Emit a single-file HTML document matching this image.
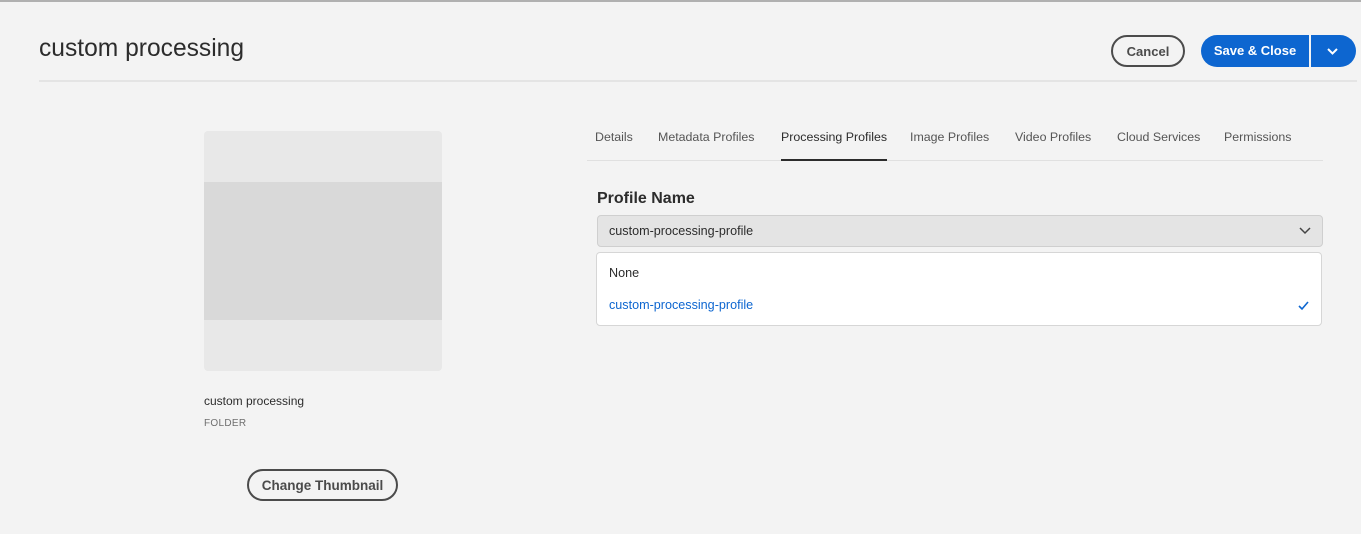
<!DOCTYPE html>
<html><head><style>
body{margin:0;width:1361px;height:534px;background:#f3f3f3;font-family:"Liberation Sans",sans-serif;position:relative;overflow:hidden;color:#2c2c2c}
.a{position:absolute}
.tab{position:absolute;top:130px;font-size:12.4px;color:#555;white-space:nowrap}
</style></head><body>
<div class="a" style="left:0;top:0;width:1361px;height:2px;background:#b0b0b0"></div>
<div class="a" style="left:39px;top:35px;font-size:24.6px;color:#2c2c2c">custom processing</div>
<div class="a" style="left:39px;top:80px;width:1318px;height:2px;background:#e4e4e4"></div>
<div class="a" style="left:1111px;top:35px;width:70px;height:28px;border:2px solid #4b4b4b;border-radius:16px;font-size:13px;font-weight:bold;text-align:center;line-height:29px;color:#4b4b4b">Cancel</div>
<div class="a" style="left:1201px;top:35px;width:108px;height:32px;background:#0d66d0;border-radius:16px 0 0 16px;color:#fff;font-size:13px;font-weight:bold;text-align:center;line-height:32px">Save &amp; Close</div>
<div class="a" style="left:1311px;top:35px;width:45px;height:32px;background:#0d66d0;border-radius:0 16px 16px 0"><svg width="45" height="32"><path d="M17 14l4.5 4.5L26 14" stroke="#fff" stroke-width="2" fill="none"/></svg></div>
<div class="a" style="left:204px;top:131px;width:238px;height:240px;background:#e8e8e8;border-radius:4px"></div>
<div class="a" style="left:204px;top:182px;width:238px;height:138px;background:#d9d9d9"></div>
<div class="a" style="left:204px;top:394px;font-size:12px">custom processing</div>
<div class="a" style="left:204px;top:418px;font-size:10px;color:#6e6e6e;letter-spacing:.3px">FOLDER</div>
<div class="a" style="left:247px;top:469px;width:147px;height:28px;border:2px solid #4b4b4b;border-radius:16px;font-size:13.5px;font-weight:bold;text-align:center;line-height:29px;color:#4b4b4b">Change Thumbnail</div>
<div class="tab" style="left:595px">Details</div>
<div class="tab" style="left:658px">Metadata Profiles</div>
<div class="tab" style="left:781px;color:#2c2c2c">Processing Profiles</div>
<div class="tab" style="left:910px">Image Profiles</div>
<div class="tab" style="left:1015px">Video Profiles</div>
<div class="tab" style="left:1117px">Cloud Services</div>
<div class="tab" style="left:1224px">Permissions</div>
<div class="a" style="left:587px;top:160px;width:736px;height:1px;background:#e0e0e0"></div>
<div class="a" style="left:781px;top:159px;width:106px;height:2px;background:#2c2c2c"></div>
<div class="a" style="left:597px;top:190px;font-size:16px;font-weight:bold">Profile Name</div>
<div class="a" style="left:597px;top:215px;width:724px;height:30px;background:#e4e4e4;border:1px solid #cfcfcf;border-radius:4px"></div>
<div class="a" style="left:609px;top:224px;font-size:12.6px">custom-processing-profile</div>
<svg class="a" style="left:1298px;top:225px" width="14" height="12"><path d="M2 3l5 5 5-5" stroke="#444" stroke-width="1.5" fill="none"/></svg>
<div class="a" style="left:596px;top:252px;width:724px;height:72px;background:#fff;border:1px solid #d6d6d6;border-radius:4px"></div>
<div class="a" style="left:609px;top:266px;font-size:12.6px">None</div>
<div class="a" style="left:609px;top:298px;font-size:12.6px;color:#0d66d0">custom-processing-profile</div>
<svg class="a" style="left:1297px;top:300px" width="14" height="12"><path d="M2 6l3 3 6-7" stroke="#0d66d0" stroke-width="1.6" fill="none"/></svg>
</body></html>
